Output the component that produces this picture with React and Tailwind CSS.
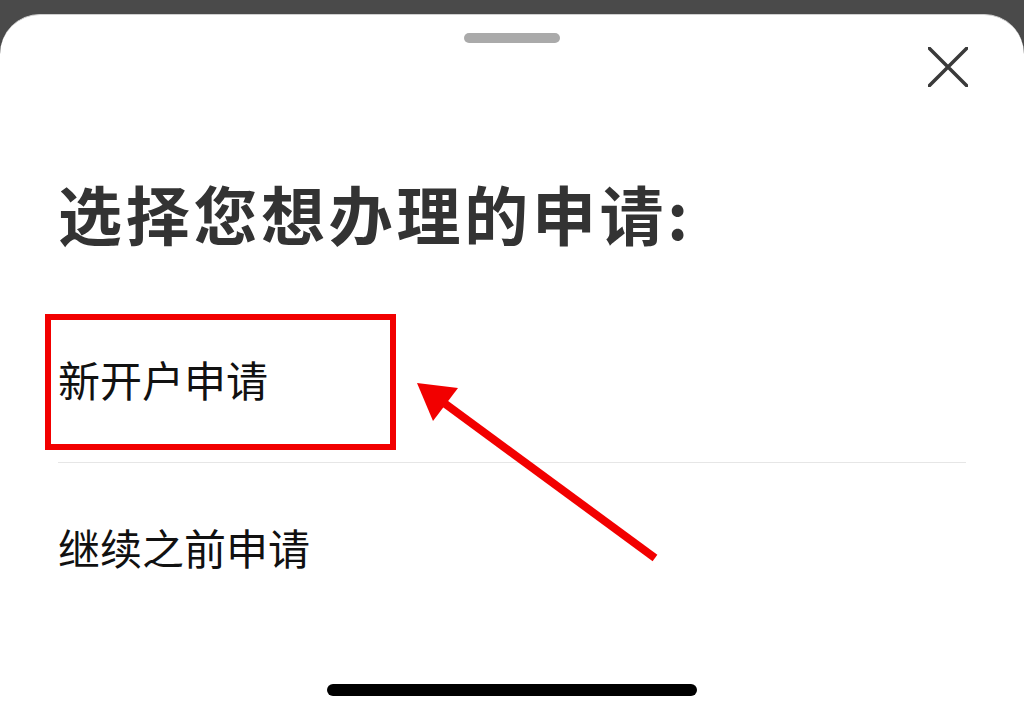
import React from 'react';

const font = { fontFamily: '"Noto Sans CJK SC", "Noto Sans", sans-serif' };

const CloseIcon = () => (
    <svg width="40" height="40" viewBox="0 0 40 40" fill="none">
        <path d="M1 1 L39 39 M39 1 L1 39" stroke="#3a3a3a" strokeWidth="3.5" strokeLinecap="round" />
    </svg>
);

// red annotation arrow, drawn in page coordinates
const Arrow = () => (
    <svg className="absolute inset-0 pointer-events-none" width="1024" height="715" viewBox="0 0 1024 715">
        <line x1="655" y1="558" x2="440" y2="400" stroke="#f20000" strokeWidth="8" />
        <polygon points="417,383 458,388 433,421" fill="#f20000" />
    </svg>
);

export default function App() {
    const items = ['新开户申请', '继续之前申请'];

    return (
        <div className="relative h-[715px] w-[1024px] overflow-hidden bg-[#4a4a4a] flex flex-col" style={font}>
            <div className="h-[14px] shrink-0" />
            <div className="relative flex-1 flex flex-col bg-white rounded-t-[40px] border-t border-[#cfcfcf]">
                <div className="mx-auto mt-[18px] w-[96px] h-[10px] rounded-full bg-[#aaaaaa]" />
                <button className="absolute right-[56px] top-[32px]">
                    <CloseIcon />
                </button>

                <div className="px-[58px]">
                    <h1 className="mt-[137px] text-[64px] leading-none font-bold tracking-[3.7px] text-[#333333]">
                        选择您想办理的申请:
                    </h1>

                    <div className="mt-[51px] flex flex-col">
                        {items.map((label, i) => (
                            <div key={label} className={`h-[168px] flex items-center ${i === 0 ? 'border-b border-[#e6e6e6]' : ''}`}>
                                <span className="text-[42px] leading-none text-[#111111]">{label}</span>
                            </div>
                        ))}
                    </div>
                </div>

                <div className="absolute left-[45px] top-[299px] w-[351px] h-[136px] border-[6px] border-[#f20000]" />

                <div className="mt-auto mb-[19px] mx-auto w-[370px] h-[12px] rounded-full bg-black" />
            </div>
            <Arrow />
        </div>
    );
}
